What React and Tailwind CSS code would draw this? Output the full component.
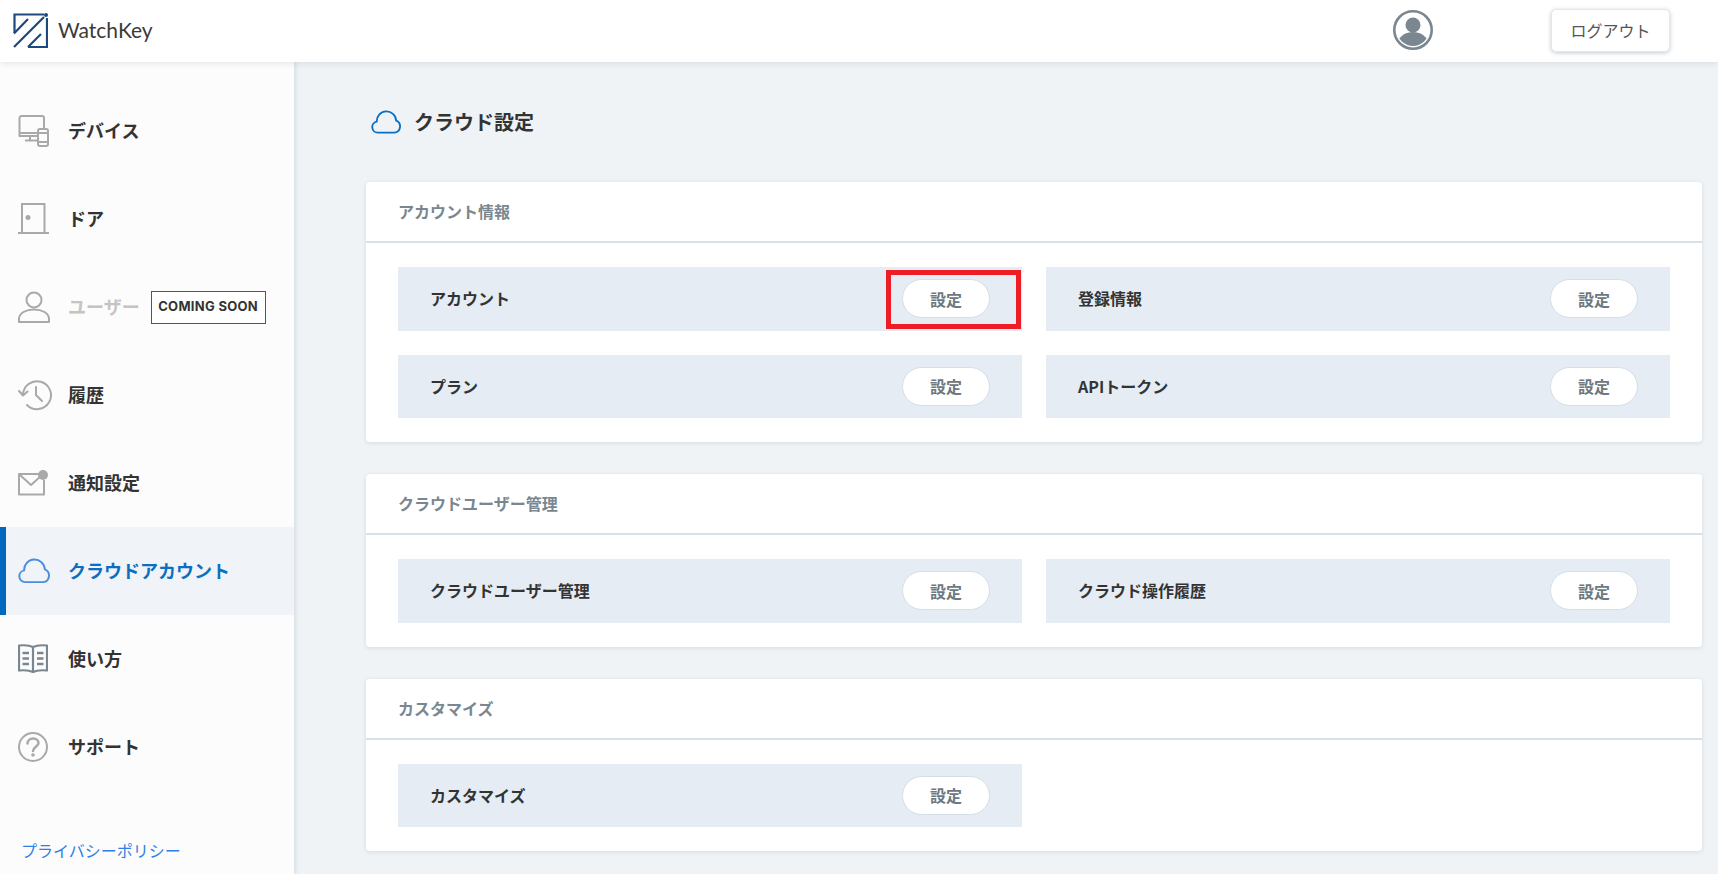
function Logo() {
  return (
    <svg width="35" height="35" viewBox="0 0 35 35" fill="none" stroke="#1d4a7c" strokeWidth="2.2">
      <path d="M31 1.5 H1.5 V20 M34 5 V34 H15" />
      <path d="M1 20.5 L15 6 M1 34 L31 4 M15 34 L28 21" />
      <circle cx="33" cy="2" r="2" fill="#1d4a7c" stroke="none" />
    </svg>
  )
}

function DeviceIcon() {
  return (
    <svg width="32" height="32" viewBox="0 0 32 32" fill="none" stroke="#a9a9a9" strokeWidth="2" strokeLinejoin="round">
      <path d="M19 21 H1.5 V3 a2 2 0 0 1 2 -2 H24 a2 2 0 0 1 2 2 V13" />
      <path d="M2 18 H20 M12 21 V25 M7 25.5 H20" />
      <rect x="20" y="14" width="10" height="17" rx="2" />
      <path d="M20 18 H30 M20 27 H30" />
    </svg>
  )
}

function DoorIcon() {
  return (
    <svg width="32" height="32" viewBox="0 0 32 32" fill="none" stroke="#a9a9a9" strokeWidth="2">
      <path d="M4 29 V1 H26.5 V29" />
      <path d="M0 30 H31" />
      <circle cx="10" cy="14.5" r="2.5" fill="#a9a9a9" stroke="none" />
    </svg>
  )
}

function UserIcon() {
  return (
    <svg width="32" height="32" viewBox="0 0 32 32" fill="none" stroke="#a9a9a9" strokeWidth="2">
      <circle cx="16" cy="9" r="7.5" />
      <path d="M1 31 V28 C1 22 8 18.5 16 18.5 C24 18.5 31 22 31 28 V31 Z" strokeLinejoin="round" />
    </svg>
  )
}

function HistoryIcon() {
  return (
    <svg width="34" height="32" viewBox="0 0 34 32" fill="none" stroke="#a9a9a9" strokeWidth="2" strokeLinecap="round" strokeLinejoin="round">
      <path d="M5 16 A14 14 0 1 1 9 26" />
      <path d="M1 12 L5 16.5 L9.5 12.5" />
      <path d="M18 8 V16 L24 22" />
    </svg>
  )
}

function MailIcon() {
  return (
    <svg width="32" height="26" viewBox="0 0 32 26" fill="none" stroke="#a9a9a9" strokeWidth="2" strokeLinejoin="round">
      <path d="M22 4 H1 V24.5 H26 V10" />
      <path d="M1.5 4.5 L13 15 L23 6" />
      <circle cx="25" cy="5" r="5" fill="#a9a9a9" stroke="none" />
    </svg>
  )
}

function CloudIcon({ size = 32, color = '#4b8fdc' }) {
  return (
    <svg width={size} height={size * 0.8} viewBox="0 0 32 26" fill="none" stroke={color} strokeWidth="2" strokeLinejoin="round">
      <path d="M7 24.5 A6 6 0 0 1 6 12.6 A10.5 10.5 0 0 1 27 11.5 A6.8 6.8 0 0 1 25.5 24.5 Z" />
    </svg>
  )
}

function BookIcon() {
  return (
    <svg width="30" height="30" viewBox="0 0 30 30" fill="none" stroke="#7a8791" strokeWidth="2.2">
      <path d="M15 3 C12 1.5 6 1 1 1.5 V26.5 C6 26 12 26.5 15 28 C18 26.5 24 26 29 26.5 V1.5 C24 1 18 1.5 15 3 Z M15 3 V29" strokeLinejoin="round" />
      <path d="M4.5 9 H11 M4.5 14.5 H11 M4.5 20 H11 M19 9 H25.5 M19 14.5 H25.5 M19 20 H25.5" strokeWidth="2.5" />
    </svg>
  )
}

function HelpIcon() {
  return (
    <svg width="30" height="30" viewBox="0 0 30 30" fill="none" stroke="#a9a9a9" strokeWidth="2" strokeLinecap="round">
      <circle cx="15" cy="15" r="14" />
      <path d="M9.5 11.5 C9.5 8.5 12 6.5 15 6.5 C18 6.5 20.5 8.5 20.5 11 C20.5 14.5 15 15 15 19" strokeWidth="2.5" />
      <circle cx="15" cy="23" r="1.8" fill="#a9a9a9" stroke="none" />
    </svg>
  )
}

function ProfileIcon() {
  return (
    <svg width="40" height="40" viewBox="0 0 40 40">
      <defs>
        <clipPath id="pc">
          <circle cx="20" cy="20" r="16" />
        </clipPath>
      </defs>
      <circle cx="20" cy="20" r="18.7" fill="none" stroke="#7a8791" strokeWidth="2.6" />
      <g clipPath="url(#pc)" fill="#7a8791">
        <circle cx="20" cy="15" r="7.5" />
        <path d="M3 40 C3 28 11 22 20 22 C29 22 37 28 37 40 Z" />
      </g>
    </svg>
  )
}

const navItems = [
  { label: 'デバイス', icon: <DeviceIcon /> },
  { label: 'ドア', icon: <DoorIcon /> },
  { label: 'ユーザー', icon: <UserIcon />, soon: true },
  { label: '履歴', icon: <HistoryIcon /> },
  { label: '通知設定', icon: <MailIcon /> },
  { label: 'クラウドアカウント', icon: <CloudIcon />, active: true },
  { label: '使い方', icon: <BookIcon /> },
  { label: 'サポート', icon: <HelpIcon /> },
]

const sections = [
  { title: 'アカウント情報', rows: ['アカウント', '登録情報', 'プラン', 'APIトークン'] },
  { title: 'クラウドユーザー管理', rows: ['クラウドユーザー管理', 'クラウド操作履歴'] },
  { title: 'カスタマイズ', rows: ['カスタマイズ'] },
]

function NavItem({ label, icon, soon, active }) {
  return (
    <div className={`flex h-[88px] items-center border-l-[6px] pl-[12px] ${active ? 'border-[#0069bf] bg-[#f0f3f7]' : 'border-transparent'}`}>
      <div className="flex w-[50px] shrink-0 items-center justify-start">{icon}</div>
      <span className={`pb-[2px] text-[18px] font-bold ${active ? 'text-[#0a6fc4]' : soon ? 'text-[#c4c4c4]' : 'text-[#333333]'}`}>{label}</span>
      {soon && (
        <span className="ml-[11px] flex h-[33px] w-[115px] items-center justify-center border border-[#555555] bg-white text-[13px] font-bold tracking-[0.3px] text-[#333333] [font-family:Inter,sans-serif]">
          COMING SOON
        </span>
      )}
    </div>
  )
}

function Row({ label, marked }) {
  return (
    <div className="relative flex h-[63.5px] items-center justify-between bg-[#e5ecf4] px-[32px]">
      <span className="pb-[1px] text-[16px] font-bold text-[#333333]">{label}</span>
      <button className="flex h-[39px] w-[88px] items-center justify-center rounded-full border border-[#d3dee8] bg-white text-[16px] font-bold text-[#6e7880]">
        設定
      </button>
      {/* red marker drawn over the first button */}
      {marked && <div className="absolute right-[1px] top-[3px] h-[59px] w-[135px] border-[5px] border-[#ee1c25]" />}
    </div>
  )
}

function Section({ title, rows }) {
  return (
    <section className="mb-[32px] rounded-[4px] bg-white shadow-[0_1px_4px_rgba(60,80,100,0.14)]">
      <div className="flex h-[61px] items-center border-b-2 border-[#d5e0e8] pb-[1px] pl-[32px] text-[16px] font-bold text-[#7a8791]">
        {title}
      </div>
      <div className="grid grid-cols-2 gap-[24px] px-[32px] py-[24px]">
        {rows.map((r) => (
          <Row key={r} label={r} marked={r === 'アカウント'} />
        ))}
      </div>
    </section>
  )
}

export default function App() {
  return (
    <div className="flex h-screen flex-col overflow-hidden bg-[#eff3f6] [font-family:'Noto_Sans_CJK_JP','Noto_Sans',sans-serif]">
      {/* Header */}
      <header className="z-20 flex h-[62px] shrink-0 items-center bg-white pb-[2px] pl-[13px] shadow-[0_1px_6px_rgba(60,80,100,0.15)]">
        <Logo />
        <span className="ml-[10px] text-[21px] text-[#3a3a3a] [font-family:Lato,sans-serif]">WatchKey</span>
        <div className="ml-auto flex items-center">
          <ProfileIcon />
          <button className="ml-[118px] mr-[48px] flex h-[43px] w-[119px] items-center justify-center rounded-[5px] border border-[#e3e8ee] bg-white text-[16px] text-[#555555] shadow-[0_1px_4px_rgba(60,80,100,0.3)]">
            ログアウト
          </button>
        </div>
      </header>

      <div className="flex min-h-0 flex-1">
        {/* Sidebar */}
        <aside className="z-10 flex w-[294px] shrink-0 flex-col bg-[#fcfcfc] pt-[25px] shadow-[2px_0_4px_rgba(60,80,100,0.12)]">
          {navItems.map((item) => (
            <NavItem key={item.label} {...item} />
          ))}
          <a className="ml-[21px] mt-[47px] text-[16px] text-[#2f7fe8]">プライバシーポリシー</a>
        </aside>

        {/* Main */}
        <main className="min-w-0 flex-1 pl-[72px] pr-[16px] pt-[35px]">
          <div className="mb-[33px] flex h-[52px] items-center pb-[2px] pl-[5px]">
            <CloudIcon size={30} color="#0a6fc4" />
            <h1 className="ml-[13px] text-[20px] font-bold text-[#333333]">クラウド設定</h1>
          </div>
          {sections.map((s) => (
            <Section key={s.title} {...s} />
          ))}
        </main>
      </div>
    </div>
  )
}
